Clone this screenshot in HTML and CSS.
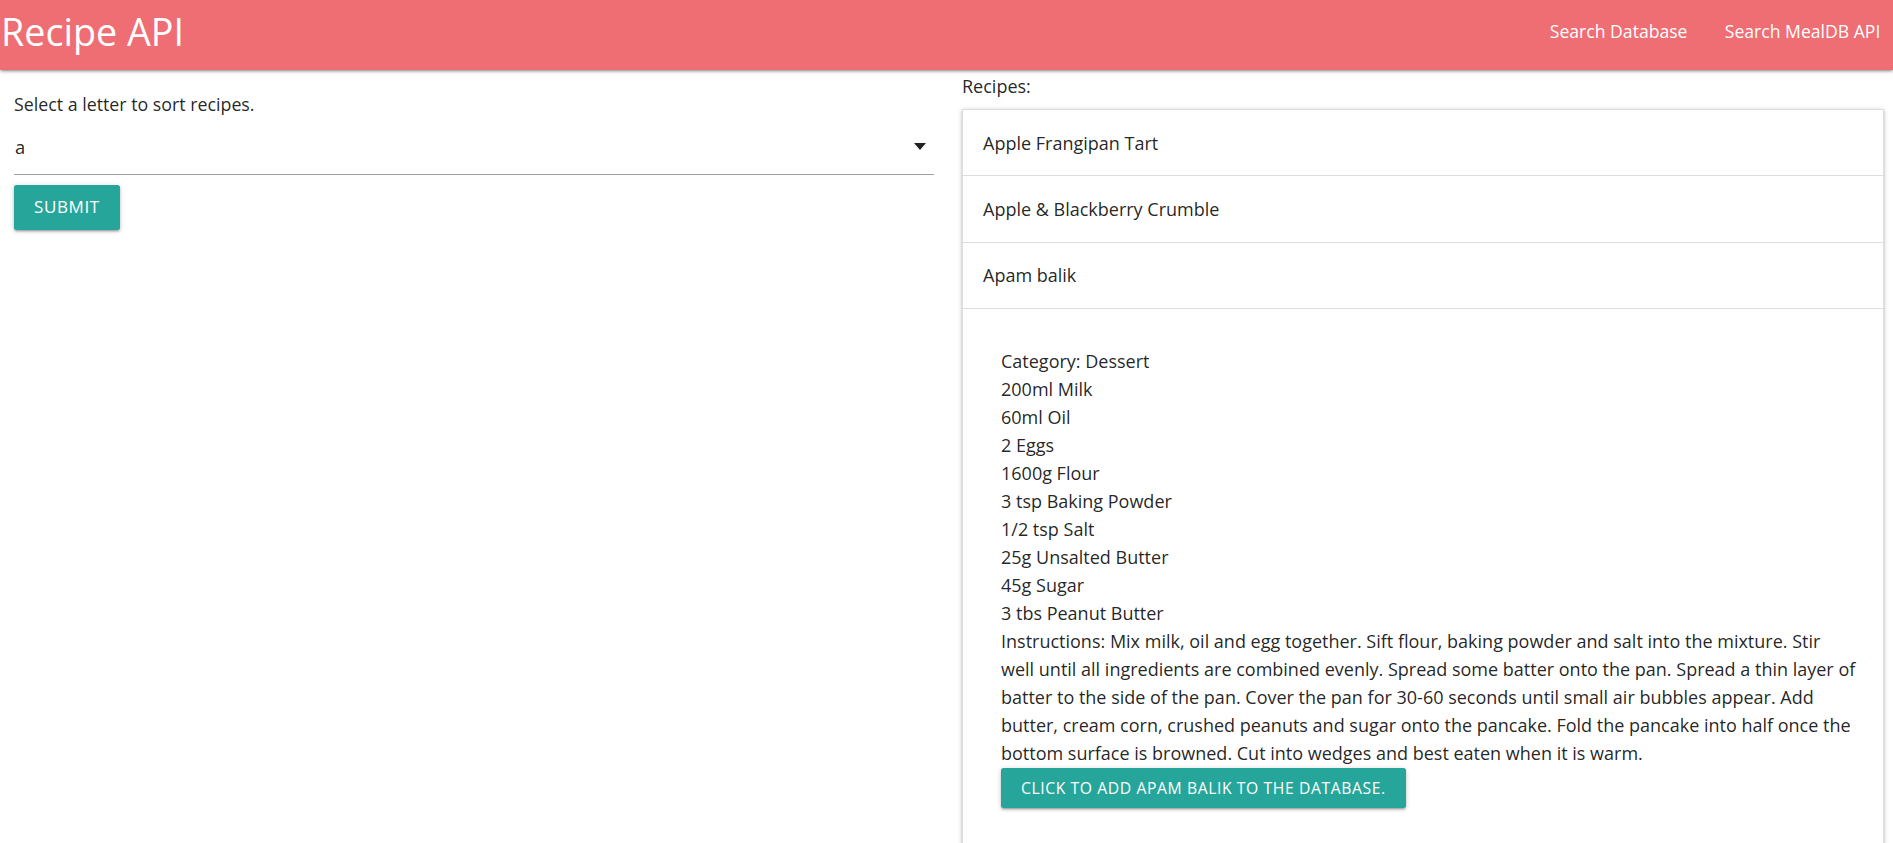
FILE: index.html
```html
<!DOCTYPE html>
<html lang="en">
<head>
<meta charset="utf-8">
<title>Recipe API</title>
<link rel="stylesheet" href="styles.css">
</head>
<body>
<nav class="nav">
  <a class="brand" href="#">Recipe API</a>
  <ul class="nav-links">
    <li><a href="#">Search Database</a></li>
    <li><a href="#">Search MealDB API</a></li>
  </ul>
</nav>
<main class="row">
  <section class="col col-left">
    <p class="select-label">Select a letter to sort recipes.</p>
    <div class="select">
      <span class="select-value">a</span>
      <svg class="caret" width="12" height="7" viewBox="0 0 12 7"><path d="M0 0H12L6 7Z" fill="#222"/></svg>
    </div>
    <button class="btn">Submit</button>
  </section>
  <section class="col col-right">
    <p class="recipes-label">Recipes:</p>
    <ul class="collapsible">
      <li class="item"><div class="item-header">Apple Frangipan Tart</div></li>
      <li class="item"><div class="item-header">Apple &amp; Blackberry Crumble</div></li>
      <li class="item">
        <div class="item-header">Apam balik</div>
        <div class="item-body">
          <ul class="ingredients">
            <li>Category: Dessert</li>
            <li>200ml Milk</li>
            <li>60ml Oil</li>
            <li>2 Eggs</li>
            <li>1600g Flour</li>
            <li>3 tsp Baking Powder</li>
            <li>1/2 tsp Salt</li>
            <li>25g Unsalted Butter</li>
            <li>45g Sugar</li>
            <li>3 tbs Peanut Butter</li>
          </ul>
          <p class="instructions">Instructions: Mix milk, oil and egg together. Sift flour, baking powder and salt into the mixture. Stir well until all ingredients are combined evenly. Spread some batter onto the pan. Spread a thin layer of batter to the side of the pan. Cover the pan for 30-60 seconds until small air bubbles appear. Add butter, cream corn, crushed peanuts and sugar onto the pancake. Fold the pancake into half once the bottom surface is browned. Cut into wedges and best eaten when it is warm.</p>
          <button class="btn btn-small">Click to add Apam balik to the database.</button>
        </div>
      </li>
    </ul>
  </section>
</main>
</body>
</html>
```
FILE: styles.css
```css
* { box-sizing: border-box; }
html, body { margin: 0; padding: 0; }
body {
  font-family: "Open Sans", "Noto Sans", sans-serif;
  font-size: 18px;
  line-height: 28px;
  color: rgba(0, 0, 0, 0.87);
  background: #fff;
  overflow: hidden;
  height: 843px;
}
a { text-decoration: none; color: inherit; }
ul { list-style: none; margin: 0; padding: 0; }
p { margin: 0; }

.nav {
  position: relative;
  z-index: 2;
  height: 70px;
  background: #ee6e73;
  color: #fff;
  display: flex;
  justify-content: space-between;
  align-items: flex-start;
  box-shadow: 0 2px 2px 0 rgba(0,0,0,.14), 0 3px 1px -2px rgba(0,0,0,.12), 0 1px 5px 0 rgba(0,0,0,.2);
}
.brand {
  font-size: 37.7px;
  line-height: 64px;
  padding-left: 1px;
  color: #fff;
}
.nav-links { display: flex; margin-right: -6px; }
.nav-links a {
  display: block;
  padding: 0 18.67px;
  line-height: 62px;
  font-size: 17.6px;
  color: #fff;
}

.row {
  display: grid;
  grid-template-columns: 948px 1fr;
}
.col-left { padding: 20px 14px 0 14px; }
.col-right { padding: 2px 9px 0 14px; }

.select-label { line-height: 28px; font-size: 17.8px; }
.select {
  height: 57px;
  border-bottom: 1px solid #9e9e9e;
  display: flex;
  align-items: center;
  justify-content: space-between;
  padding: 0 8px 0 1px;
  margin-bottom: 10px;
}
.select-value { font-size: 18.4px; padding-top: 1px; }
.caret { display: block; }

.btn {
  display: inline-block;
  border: none;
  border-radius: 2.5px;
  background: #26a69a;
  color: #fff;
  font-family: inherit;
  text-transform: uppercase;
  height: 44.8px;
  line-height: 44.8px;
  padding: 0 20px;
  font-size: 17px;
  letter-spacing: 0.6px;
  box-shadow: 0 2px 2px 0 rgba(0,0,0,.14), 0 3px 1px -2px rgba(0,0,0,.12), 0 1px 5px 0 rgba(0,0,0,.2);
  cursor: pointer;
}
.btn-small {
  height: 40px;
  line-height: 40px;
  font-size: 15.7px;
  margin-top: 1px;
}

.recipes-label { line-height: 28px; }
.collapsible {
  margin-top: 9px;
  border: 1px solid #ddd;
  border-bottom: none;
  box-shadow: 0 2px 2px 0 rgba(0,0,0,.14), 0 3px 1px -2px rgba(0,0,0,.12), 0 1px 5px 0 rgba(0,0,0,.2);
}
.item-header {
  padding: 18.67px 20px;
  border-bottom: 1px solid #ddd;
  line-height: 28px;
}
.item-body {
  padding: 38px 26px 37px 38px;
  border-bottom: 1px solid #ddd;
}
```
